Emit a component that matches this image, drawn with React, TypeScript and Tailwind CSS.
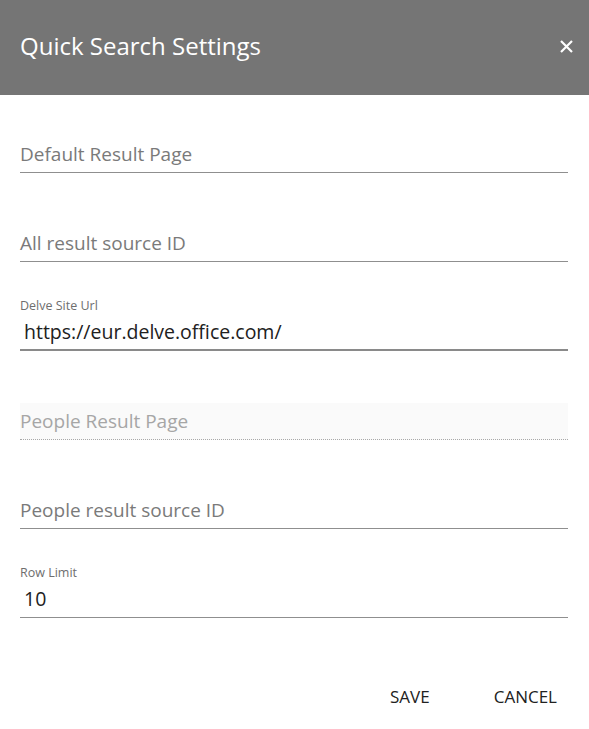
const fields = [
  { id: "defaultResultPage", placeholder: "Default Result Page" },
  { id: "allResultSourceId", placeholder: "All result source ID" },
  { id: "delveSiteUrl", label: "Delve Site Url", value: "https://eur.delve.office.com/", focused: true },
  { id: "peopleResultPage", placeholder: "People Result Page", disabled: true },
  { id: "peopleResultSourceId", placeholder: "People result source ID" },
  { id: "rowLimit", label: "Row Limit", value: "10" },
]

type Field = {
  id: string
  placeholder?: string
  label?: string
  value?: string
  focused?: boolean
  disabled?: boolean
}

function SettingsField({ field }: { field: Field }) {
  const border = field.disabled
    ? "border-b border-dotted border-[#a8a8a8] bg-[#fafafa]"
    : field.focused
      ? "border-b-2 border-[#8a8a8a]"
      : "border-b border-[#8f8f8f]"

  return (
    <div className="flex flex-col">
      <div className="h-4 text-[12.5px] leading-4 text-[#6e6e6e]">{field.label}</div>
      <div className={`flex h-[37px] items-center ${border}`}>
        {field.value ? (
          <span className="pl-1 text-[19.5px] text-[#212121]">{field.value}</span>
        ) : (
          <span className={`text-[19px] ${field.disabled ? "text-[#a6a6a6]" : "text-[#7a7a7a]"}`}>
            {field.placeholder}
          </span>
        )}
      </div>
    </div>
  )
}

export default function App() {
  return (
    <div className="flex h-[729px] w-[589px] flex-col bg-white font-['Open_Sans',sans-serif]">
      {/* Header */}
      <div className="flex h-[95px] items-center justify-between bg-[#757575] pb-[3px] pl-5 pr-[11px]">
        <h1 className="text-2xl text-white">Quick Search Settings</h1>
        <button className="flex h-6 w-6 items-center justify-center">
          <svg width="13" height="13" viewBox="0 0 13 13">
            <path d="M1 1 L12 12 M12 1 L1 12" stroke="white" strokeWidth="2.2" />
          </svg>
        </button>
      </div>

      {/* Fields */}
      <div className="flex flex-col gap-[36px] pl-5 pr-[21px] pt-[25px]">
        {fields.map((field) => (
          <SettingsField key={field.id} field={field} />
        ))}
      </div>

      {/* Actions */}
      <div className="mt-auto flex justify-end gap-[32px] pb-[14px] pr-[16px]">
        <button className="h-9 px-4 text-[17px] text-[#212121]">SAVE</button>
        <button className="h-9 px-4 text-[17px] text-[#212121]">CANCEL</button>
      </div>
    </div>
  )
}
